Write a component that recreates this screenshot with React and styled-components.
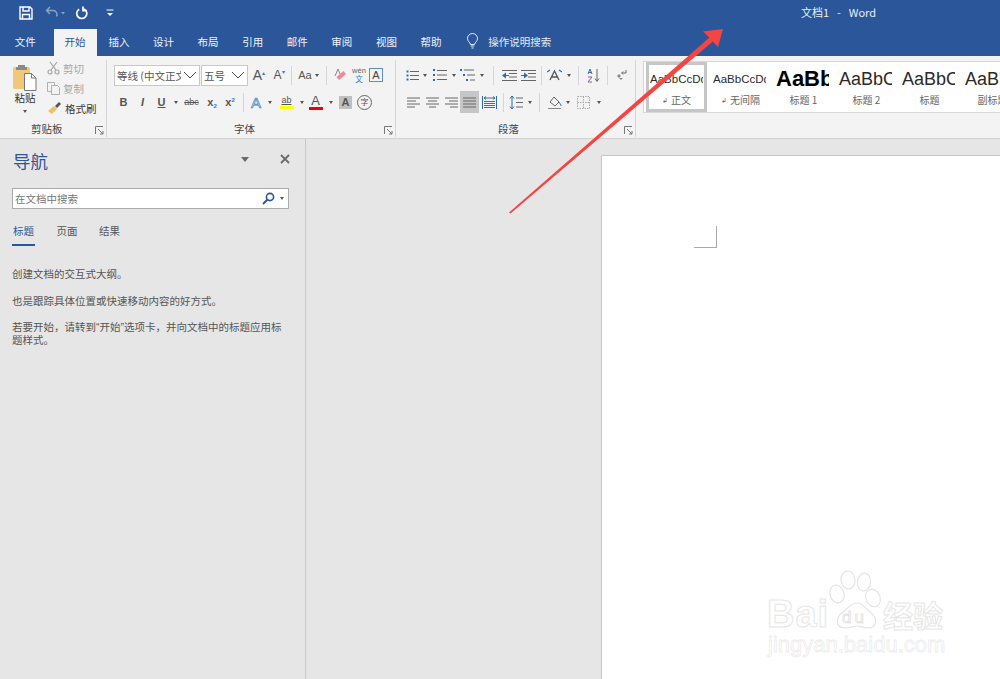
import React from "react";
import styled, { createGlobalStyle } from "styled-components";

const Global = createGlobalStyle`
  html, body { margin: 0; padding: 0; background: #e6e6e6; }
  body { width: 1000px; height: 679px; overflow: hidden; font-family: "Noto Sans CJK SC", "Liberation Sans", sans-serif; }
`;
const Shell = styled.div`position: relative; width: 1000px; height: 679px; overflow: hidden; display: flex; flex-direction: column;`;
const TitleBar = styled.header`background: #2b579a; height: 56px; display: flex; flex-direction: column; flex: none;`;
const TopRow = styled.div`height: 29px; display: flex; align-items: center; color: #fff;`;
const Qat = styled.div`width: 120px; display: flex; align-items: center; padding-left: 19px; box-sizing: border-box; margin-top: -3px;`;
const QatSlot = styled.span`display: flex; width: ${p => p.$w}px; opacity: ${p => p.$dim ? .45 : 1};`;
const DocTitle = styled.div`margin-left: 681px; margin-top: -6px; font-size: 11px; color: #e8edf5; white-space: pre; word-spacing: 1.5px;`;
const TabRow = styled.nav`height: 27px; display: flex; padding-left: 3px; align-items: stretch;`;
const Tab = styled.div`width: ${p => p.$w || 44.6}px; margin-left: ${p => p.$ml || 0}px; display: flex; align-items: center; justify-content: center; font-size: 10.5px; flex: none; padding-bottom: 3px; box-sizing: border-box;
  color: ${p => p.$on ? "#2b579a" : "#f0f3f8"}; background: ${p => p.$on ? "#f3f3f3" : "transparent"};`;
const Search = styled.div`display: flex; align-items: center; gap: 9px; margin-left: 13px; font-size: 10.5px; color: #e4eaf3; padding-bottom: 3px;`;

const Ribbon = styled.section`height: 83px; background: #f3f3f3; border-bottom: 1px solid #d2d2d2; box-sizing: border-box; flex: none; display: flex; overflow: hidden;`;
const Group = styled.div`width: ${p => p.$w}px; height: 77px; margin-top: 4px; flex: none; border-right: 1px solid #d6d6d6; box-sizing: border-box; display: flex; flex-direction: column; position: relative;`;
const GroupBody = styled.div`height: 60px; padding: 4px 0 0 ${p => p.$pl || 0}px; box-sizing: border-box; display: flex; flex-direction: column; gap: 5px;`;
const GroupLabel = styled.div`height: 17px; font-size: 10.5px; color: #444; line-height: 17px; padding-left: ${p => p.$pl}px;`;
const Launcher = styled.span`position: absolute; right: 2px; bottom: 2px; display: flex;`;
const Row = styled.div`display: flex; align-items: center; height: 22px;`;
const Cell = styled.span`width: ${p => p.$w}px; height: 22px; flex: none; display: flex; align-items: center; justify-content: center; background: ${p => p.$on ? "#c6c6c6" : "transparent"};`;
const Sep = styled.span`width: 1px; height: 19px; background: #d6d6d6; flex: none; margin: 0 ${p => p.$m || 5}px;`;
const Drop = styled.span`width: 0; height: 0; border-left: 2.5px solid transparent; border-right: 2.5px solid transparent; border-top: 3px solid #555; flex: none; margin-left: ${p => p.$ml || 0}px;`;

const ClipBody = styled.div`display: flex; height: 60px;`;
const PasteCol = styled.div`width: 47px; flex: none; display: flex; flex-direction: column; align-items: center; padding: 3px 0 0 3px; box-sizing: border-box;`;
const PasteIcon = styled.span`display: flex; height: 28px; margin-bottom: 0;`;
const PasteLabel = styled.span`font-size: 10.5px; color: #333; line-height: 14px;`;
const PasteDrop = styled(Drop)`margin-top: 5px;`;
const ClipCol = styled.div`display: flex; flex-direction: column; margin-top: -2px;`;
const ClipItem = styled.div`height: 20px; display: flex; align-items: center; gap: 3px; font-size: 10.5px; color: ${p => p.$off ? "#a6a6a6" : "#3a3a3a"};`;

const Select = styled.div`width: ${p => p.$w}px; height: 21px; background: #fff; border: 1px solid #c8c8c8; box-sizing: border-box; display: flex; align-items: center; justify-content: space-between; flex: none; font-size: 10.5px; color: #555; padding-left: 2px; overflow: hidden; margin-right: ${p => p.$mr || 0}px;`;
const SelectText = styled.span`white-space: nowrap; overflow: hidden; flex: 1; min-width: 0;`;
const Chevron = styled.svg`flex: none; margin: 0 2px;`;
const Glyph = styled.span`font-family: "Liberation Sans", sans-serif; font-size: ${p => p.$s || 11}px; font-weight: ${p => p.$b ? 700 : 400}; font-style: ${p => p.$i ? "italic" : "normal"}; color: ${p => p.$c || "#555"}; text-decoration: ${p => p.$u ? "underline" : p.$x ? "line-through" : "none"}; line-height: 1; display: inline-flex; align-items: baseline; white-space: nowrap;`;
const OutlineA = styled(Glyph)`-webkit-text-stroke: .7px #4a86c5; color: #e8f0f8;`;
const Tiny = styled.span`font-size: 6px; color: ${p => p.$c || "#2b7cd3"}; position: relative; top: ${p => p.$t || 0}px;`;
const ColorStack = styled.span`display: flex; flex-direction: column; align-items: center; width: 15px;`;
const ColorBar = styled.span`display: block; width: 14px; height: 3px; background: ${p => p.$c}; margin-top: ${p => p.$mt || 0}px;`;
const Boxed = styled.span`width: 14px; height: 14px; border: 1px solid #5b8fc9; box-sizing: border-box; display: flex; align-items: center; justify-content: center; font: 11px "Liberation Sans", sans-serif; color: #444;`;
const Shade = styled.span`width: 13px; height: 13px; background: #bfbfbf; display: flex; align-items: center; justify-content: center; font: 700 11px "Liberation Sans", sans-serif; color: #555;`;
const Circled = styled.span`width: 13px; height: 13px; border: 1px solid #666; border-radius: 50%; display: flex; align-items: center; justify-content: center; font-size: 8px; color: #555; line-height: 1;`;
const Wen = styled.span`display: flex; flex-direction: column; align-items: center; line-height: 8px; font-size: 7.5px; color: #666; font-family: "Liberation Sans", sans-serif;`;
const WenZh = styled.span`color: #2b7cd3; font-family: "Noto Sans CJK SC", sans-serif; font-size: 7.5px;`;

const StylesArea = styled.div`flex: 1; padding: 5px 0 0 7px; min-width: 0;`;
const Gallery = styled.div`height: 52px; background: #fff; border: 1px solid #d8d8d8; border-right: 0; box-sizing: border-box; display: flex; overflow: hidden; align-items: stretch;`;
const StyleItem = styled.div`width: 63px; flex: none; box-sizing: border-box; padding: 0 1px; display: flex; flex-direction: column; align-items: center; border: ${p => p.$on ? "3px solid #c6c6c6" : "3px solid transparent"}; ${p => p.$on && "margin: 0 2px; width: 61px; padding: 0 1px; "}`;
const Sample = styled.div`height: 28px; width: 53px; align-self: flex-start; overflow: hidden; white-space: nowrap; display: flex; align-items: center; font-family: "Liberation Sans", sans-serif; font-size: ${p => p.$s}px; font-weight: ${p => p.$b ? 700 : 400}; color: ${p => p.$b ? "#000" : "#2a2a2a"};`;
const StyleName = styled.div`font-size: 10px; line-height: 14px; color: #666; white-space: nowrap; display: flex; align-items: center; gap: 3px;`;
const Ret = styled.span`font-size: 7px; color: #666;`;

const Body = styled.main`flex: 1; display: flex; min-height: 0;`;
const NavPane = styled.aside`width: 306px; flex: none; border-right: 1px solid #c8c8c8; background: #e6e6e6; padding: 10px 16px 0 12px; box-sizing: border-box;`;
const NavHead = styled.div`display: flex; align-items: center; height: 25px;`;
const NavTitle = styled.h2`margin: -2px 0 0; font-size: 17.5px; font-weight: 400; color: #2b579a; flex: 1; line-height: 25px; padding-left: 1px;`;
const NavMenu = styled.span`width: 0; height: 0; border-left: 4.5px solid transparent; border-right: 4.5px solid transparent; border-top: 5px solid #6a6a6a; margin-right: 31px; margin-top: -4px;`;
const NavClose = styled.span`display: flex; margin-right: -1px; margin-top: -5px;`;
const NavSearch = styled.div`height: 21px; margin-top: 14px; width: 277px; background: #fff; border: 1px solid #ababab; box-sizing: border-box; display: flex; align-items: center; font-size: 10.5px; color: #777; padding: 0 4px 0 2px;`;
const NavHint = styled.span`flex: 1;`;
const NavTabs = styled.div`display: flex; margin-top: 13px; height: 24px; box-sizing: border-box;`;
const NavTab = styled.div`width: ${p => p.$w}px; flex: none; font-size: 10.5px; line-height: 17px; height: 24px; box-sizing: border-box; color: ${p => p.$on ? "#2b579a" : "#555"}; margin-right: ${p => p.$mr}px; text-align: center; border-bottom: ${p => p.$on ? "2.5px solid #2b579a" : "0"};`;
const NavText = styled.p`margin: ${p => p.$mt}px 0 0; font-family: "Liberation Sans", "Noto Sans CJK SC", sans-serif; font-size: 10.5px; line-height: 13px; color: #555; width: 277px;`;
const DocArea = styled.div`flex: 1; padding: 16px 0 0 295px; overflow: hidden;`;
const Page = styled.div`width: 500px; height: 600px; background: #fff; border: 1px solid #c8c8c8; box-sizing: border-box; padding: 70px 0 0 92px;`;
const CropMark = styled.div`width: 23px; height: 22px; border-right: 1px solid #aaa; border-bottom: 1px solid #aaa; box-sizing: border-box;`;

const ArrowSvg = styled.svg`position: absolute; left: 0; top: 0; pointer-events: none;`;
const Watermark = styled.div`position: absolute; left: 765px; top: 570px; width: 185px; height: 90px; pointer-events: none; color: #fff;`;
const Paw = styled.svg`position: absolute; left: 0; top: 0;`;
const WmBai = styled.span`position: absolute; left: 2px; top: 25px; font: 700 38px/38px "Liberation Sans", sans-serif; -webkit-text-stroke: 1px #e6e6e6; color: #fff; letter-spacing: 1px;`;
const WmDu = styled.span`position: absolute; left: 77px; top: 38px; font: 400 17px/19px "Liberation Sans", sans-serif; -webkit-text-stroke: .8px #e2e2e2; color: #fff; letter-spacing: 3px;`;
const WmCn = styled.span`position: absolute; left: 118px; top: 28px; font: 700 30px/32px "Noto Sans CJK SC", sans-serif; -webkit-text-stroke: 1px #e6e6e6; color: #fff;`;
const WmUrl = styled.span`position: absolute; left: 3px; top: 63px; font: 400 22px/24px "Liberation Sans", sans-serif; -webkit-text-stroke: .8px #ececec; color: #fff; white-space: nowrap;`;

const I = ({ w = 14, h = 14, children, s = "#555", sw = 1, f = "none" }) => (
  <svg width={w} height={h} viewBox={`0 0 ${w} ${h}`} fill={f} stroke={s} strokeWidth={sw}>{children}</svg>
);
const Lines = ({ x = 0, w = 13, ys, c = "#666", wid }) => ys.map((y, i) => (
  <line key={i} x1={x + (wid && wid[i] ? wid[i][0] : 0)} x2={x + (wid && wid[i] ? wid[i][1] : w)} y1={y} y2={y} stroke={c} />
));

const Launch = () => (
  <I w={9} h={9} s="#777"><path d="M.5 8V.5H8M3 3l5 5M8 5v3H5" /></I>
);
const Chev = ({ w = 14 }) => (
  <Chevron width={w} height="8" viewBox="0 0 14 8" fill="none" stroke="#444"><path d="M1 1l6 6 6-6" /></Chevron>
);

export default function App() {
  return (
    <Shell>
      <Global />
      <TitleBar>
        <TopRow>
          <Qat>
            <QatSlot $w={26}>
              <I w={14} h={14} s="#fff" sw={1.4}><path d="M1 1h10l2 2v10H1z" /><path d="M4 1v4h6V1M3.5 13V8.5h7V13" /></I>
            </QatSlot>
            <QatSlot $w={30} $dim>
              <I w={21} h={14} s="#fff" sw={1.4}><path d="M5 1L1.5 4.5 5 8M2 4.5h6a4 4 0 0 1 3.5 6" /><path d="M16 6l2 2.5L20 6z" fill="#fff" stroke="none" /></I>
            </QatSlot>
            <QatSlot $w={31}>
              <I w={13} h={14} s="#fff" sw={1.7}><path d="M4.2 3.2A5 5 0 1 0 9 3M8 .5v4.2h4" /></I>
            </QatSlot>
            <QatSlot $w={10}>
              <I w={8} h={8} s="#fff"><path d="M.5 1h7" /><path d="M1 4h6L4 7z" fill="#fff" stroke="none" /></I>
            </QatSlot>
          </Qat>
          <DocTitle>文档1  -  Word</DocTitle>
        </TopRow>
        <TabRow>
          <Tab>文件</Tab>
          <Tab $on $w={43} $ml={6}>开始</Tab>
          {["插入", "设计", "布局", "引用", "邮件", "审阅", "视图", "帮助"].map(t => (
            <Tab key={t}>{t}</Tab>
          ))}
          <Search>
            <I w={13} h={16} s="#e8edf5"><path d="M4.5 11.5C4 9 1.5 8.5 1.5 5.5a5 5 0 0 1 10 0c0 3-2.5 3.5-3 6zM4.7 13h3.6M5.5 15h2" /></I>
            操作说明搜索
          </Search>
        </TabRow>
      </TitleBar>

      <Ribbon>
        <Group $w={107}>
          <ClipBody>
            <PasteCol>
              <PasteIcon>
                <I w={26} h={28} s="none">
                  <rect x="1" y="4" width="17" height="22" rx="1.5" fill="#f0c878" />
                  <path d="M6 4V2h7v2h2v3H4V4z" fill="#8a8a8a" />
                  <path d="M12.5 10.5h7l4.5 4.5v12.5h-11.5z" fill="#fff" stroke="#777" />
                  <path d="M19.5 10.5V15H24" stroke="#777" fill="none" />
                </I>
              </PasteIcon>
              <PasteLabel>粘贴</PasteLabel>
              <PasteDrop />
            </PasteCol>
            <ClipCol>
              <ClipItem $off>
                <I w={13} h={14} s="#a6a6a6" sw={1.2}><circle cx="3" cy="11" r="2" /><circle cx="10" cy="11" r="2" /><path d="M4 9l6-8M9 9L3 1" /></I>
                剪切
              </ClipItem>
              <ClipItem $off>
                <I w={13} h={14} s="#b0b0b0"><path d="M.5 1.5h7v3M.5 1.5v9h3.5" /><path d="M4.5 4.5h6l2 2v7h-8z" /></I>
                复制
              </ClipItem>
              <ClipItem>
                <I w={15} h={14} s="none"><path d="M1 10l6-5 3 3-5 5z" fill="#f0c060" /><path d="M8 5l4-4 2 2-4 4z" fill="#555" /></I>
                格式刷
              </ClipItem>
            </ClipCol>
          </ClipBody>
          <GroupLabel $pl={31}>剪贴板</GroupLabel>
          <Launcher><Launch /></Launcher>
        </Group>

        <Group $w={289}>
          <GroupBody $pl={7}>
            <Row>
              <Select $w={86} $mr={1}><SelectText>等线 (中文正文)</SelectText><Chev /></Select>
              <Select $w={47}><SelectText>五号</SelectText><Chev /></Select>
              <Cell $w={22}><Glyph $s={14}>A<Tiny $t={-5}>▴</Tiny></Glyph></Cell>
              <Cell $w={18}><Glyph $s={12}>A<Tiny $t={-5}>▾</Tiny></Glyph></Cell>
              <Sep $m={3} />
              <Cell $w={27}><Glyph $s={11}>Aa</Glyph><Drop $ml={3} /></Cell>
              <Sep $m={4} />
              <Cell $w={18}>
                <I w={15} h={14} s="none"><path d="M6 12l7-6-2.5-3-7 6z" fill="#f08a94" /><path d="M2 8l3-7 2 5" stroke="#888" /></I>
              </Cell>
              <Cell $w={20}><Wen>wén<WenZh>文</WenZh></Wen></Cell>
              <Cell $w={14}><Boxed>A</Boxed></Cell>
            </Row>
            <Row>
              <Cell $w={19}><Glyph $b>B</Glyph></Cell>
              <Cell $w={19}><Glyph $b $i>I</Glyph></Cell>
              <Cell $w={19}><Glyph $b $u>U</Glyph></Cell>
              <Cell $w={9}><Drop /></Cell>
              <Cell $w={23}><Glyph $s={9} $x>abc</Glyph></Cell>
              <Cell $w={18}><Glyph $b>x<Tiny $t={2}>2</Tiny></Glyph></Cell>
              <Cell $w={18}><Glyph $b>x<Tiny $t={-4}>2</Tiny></Glyph></Cell>
              <Sep $m={4} />
              <Cell $w={16}><OutlineA $s={15}>A</OutlineA></Cell>
              <Cell $w={11}><Drop /></Cell>
              <Cell $w={23}><ColorStack><Glyph $s={9} $u>ab</Glyph><ColorBar $c="#ffff00" $mt={1} /></ColorStack></Cell>
              <Cell $w={7}><Drop /></Cell>
              <Cell $w={21}><ColorStack><Glyph $s={13}>A</Glyph><ColorBar $c="#f00000" /></ColorStack></Cell>
              <Cell $w={10}><Drop /></Cell>
              <Cell $w={19}><Shade>A</Shade></Cell>
              <Cell $w={19}><Circled>字</Circled></Cell>
            </Row>
          </GroupBody>
          <GroupLabel $pl={127}>字体</GroupLabel>
          <Launcher><Launch /></Launcher>
        </Group>

        <Group $w={240}>
          <GroupBody $pl={8}>
            <Row>
              <Cell $w={16}><I w={13} h={13}><path d="M.5 1.5h2v2h-2zM.5 5.5h2v2h-2zM.5 9.5h2v2h-2z" fill="#2b6cb0" stroke="none" /><Lines x={4} w={9} ys={[2.5, 6.5, 10.5]} /></I></Cell>
              <Cell $w={10}><Drop /></Cell>
              <Cell $w={19}><I w={14} h={14}><path d="M0 1h2v2H0zM0 6h2v2H0zM0 11h2v2H0z" fill="#2b6cb0" stroke="none" /><Lines x={4} w={10} ys={[2.5, 7, 11.5]} /></I></Cell>
              <Cell $w={9}><Drop /></Cell>
              <Cell $w={18}><I w={15} h={14}><path d="M0 1h2v2H0zM3 6h2v2H3zM6 11h2v2H6z" fill="#2b6cb0" stroke="none" /><Lines ys={[2]} x={4} w={10} /><Lines ys={[7]} x={7} w={8} /><Lines ys={[12]} x={10} w={5} /></I></Cell>
              <Cell $w={11}><Drop /></Cell>
              <Sep $m={6} />
              <Cell $w={19}><I w={15} h={13}><Lines x={0} w={15} ys={[1.5, 11.5]} /><Lines x={7} w={8} ys={[4.5, 8]} /><path d="M0 6.5L4 3.5v6z" fill="#2b6cb0" stroke="none" /><path d="M3 6.5h4" stroke="#2b6cb0" /></I></Cell>
              <Cell $w={19}><I w={15} h={13}><Lines x={0} w={15} ys={[1.5, 11.5]} /><Lines x={7} w={8} ys={[4.5, 8]} /><path d="M6 6.5L2 3.5v6z" fill="#2b6cb0" stroke="none" transform="translate(1 0)" /><path d="M0 6.5h4" stroke="#2b6cb0" /></I></Cell>
              <Sep $m={3} />
              <Cell $w={19}><I w={15} h={14} s="#555" sw={1.3}><path d="M3 12L7.5 3l4.5 9M4.5 9h6" /><path d="M0 4l3-2M15 4l-3-2" stroke="#2b6cb0" /></I></Cell>
              <Cell $w={9}><Drop /></Cell>
              <Sep $m={5} />
              <Cell $w={18}><I w={13} h={15} s="none"><path d="M1 6l2-5 2 5M1.5 4.5h3" stroke="#2b6cb0" /><path d="M1 9h4l-4 5h4" stroke="#8a5bb5" /><path d="M10 1v12M8 10.5l2 3 2-3" stroke="#666" /></I></Cell>
              <Sep $m={5} />
              <Cell $w={16}><I w={11} h={13} s="#666"><path d="M10 1v3H6M7 2.5L5.5 4 7 5.5" /><path d="M1 7l2 2 2-2-2-2zM3 9l2 2 2-2" fill="#888" stroke="none" /></I></Cell>
            </Row>
            <Row>
              <Cell $w={19}><I w={13} h={11}><Lines ys={[1, 4, 7, 10]} wid={[[0, 13], [0, 9], [0, 13], [0, 8]]} /></I></Cell>
              <Cell $w={19}><I w={13} h={11}><Lines ys={[1, 4, 7, 10]} wid={[[0, 13], [2, 11], [0, 13], [3, 10]]} /></I></Cell>
              <Cell $w={18}><I w={13} h={11}><Lines ys={[1, 4, 7, 10]} wid={[[0, 13], [4, 13], [0, 13], [5, 13]]} /></I></Cell>
              <Cell $w={19} $on><I w={13} h={11}><Lines ys={[1, 4, 7, 10]} /></I></Cell>
              <Cell $w={21}><I w={15} h={15}><path d="M.5 1v13M14.5 1v13" stroke="#2b6cb0" /><path d="M2 3h11M4 1.5L2 3l2 1.5M11 1.5L13 3l-2 1.5" stroke="#2b6cb0" /><Lines x={2} w={11} ys={[6.5, 8.5, 10.5, 12.5]} /></I></Cell>
              <Sep $m={3} />
              <Cell $w={18}><I w={14} h={15}><path d="M3 1v13M1 3.5L3 1l2 2.5M1 11.5L3 14l2-2.5" stroke="#2b6cb0" /><Lines x={7} w={7} ys={[3, 7.5, 12]} /></I></Cell>
              <Cell $w={9}><Drop /></Cell>
              <Sep $m={5} />
              <Cell $w={18}><I w={15} h={15} s="#666"><path d="M3 7l4-5 5 5-4 4z" /><path d="M12 7c1 2 2 2 2 4" stroke="#2b6cb0" /><path d="M1 13.5h13" stroke="#888" sw={2} /></I></Cell>
              <Cell $w={9}><Drop /></Cell>
              <Cell $w={23}><I w={13} h={13} s="#aaa"><path d="M.5.5h12v12H.5zM6.5.5v12M.5 6.5h12" strokeDasharray="1.5 1" /></I></Cell>
              <Cell $w={8}><Drop /></Cell>
            </Row>
          </GroupBody>
          <GroupLabel $pl={102}>段落</GroupLabel>
          <Launcher><Launch /></Launcher>
        </Group>

        <StylesArea>
          <Gallery>
            <StyleItem $on><Sample $s={11.5}>AaBbCcDd</Sample><StyleName><Ret>↲</Ret>正文</StyleName></StyleItem>
            <StyleItem><Sample $s={11.5}>AaBbCcDd</Sample><StyleName><Ret>↲</Ret>无间隔</StyleName></StyleItem>
            <StyleItem><Sample $s={22} $b>AaBb</Sample><StyleName>标题 1</StyleName></StyleItem>
            <StyleItem><Sample $s={18}>AaBbC</Sample><StyleName>标题 2</StyleName></StyleItem>
            <StyleItem><Sample $s={18}>AaBbC</Sample><StyleName>标题</StyleName></StyleItem>
            <StyleItem><Sample $s={18}>AaBbC</Sample><StyleName>副标题</StyleName></StyleItem>
          </Gallery>
        </StylesArea>
      </Ribbon>

      <Body>
        <NavPane>
          <NavHead>
            <NavTitle>导航</NavTitle>
            <NavMenu />
            <NavClose><I w={10} h={10} s="#6a6a6a" sw={1.8}><path d="M1 1l8 8M9 1l-8 8" /></I></NavClose>
          </NavHead>
          <NavSearch>
            <NavHint>在文档中搜索</NavHint>
            <I w={13} h={13} s="#2b579a" sw={1.6}><circle cx="8" cy="5" r="3.6" /><path d="M5.5 7.5L1 12" strokeWidth="2" /></I>
            <Drop $ml={5} />
          </NavSearch>
          <NavTabs>
            <NavTab $on $w={23} $mr={21}>标题</NavTab>
            <NavTab $w={22} $mr={20}>页面</NavTab>
            <NavTab $w={23} $mr={0}>结果</NavTab>
          </NavTabs>
          <NavText $mt={22}>创建文档的交互式大纲。</NavText>
          <NavText $mt={14}>也是跟踪具体位置或快速移动内容的好方式。</NavText>
          <NavText $mt={13}>若要开始，请转到“开始”选项卡，并向文档中的标题应用标题样式。</NavText>
        </NavPane>
        <DocArea>
          <Page><CropMark /></Page>
        </DocArea>
      </Body>

      <ArrowSvg width="1000" height="679" viewBox="0 0 1000 679">
        <polygon points="509,212.5 510.5,213.5 712.8,41.6 718,47 723,29 703,31.5 709.5,37.5" fill="#f44545" />
      </ArrowSvg>

      <Watermark>
        <Paw width="185" height="90" viewBox="0 0 185 90" fill="#fff" stroke="#e4e4e4" strokeWidth="1.2">
          <ellipse cx="72" cy="24" rx="7" ry="9" transform="rotate(-20 72 24)" />
          <ellipse cx="83" cy="10" rx="7" ry="9" transform="rotate(-6 83 10)" />
          <ellipse cx="99" cy="12" rx="6.5" ry="9" transform="rotate(8 99 12)" />
          <ellipse cx="108" cy="28" rx="7" ry="9" transform="rotate(-25 108 28)" />
          <path d="M92 33c6 0 8 5 13 9 7 5 9 16-3 16-5 0-6-2-10-2s-6 2-11 2c-12 0-10-11-3-16 5-4 8-9 14-9z" />
        </Paw>
        <WmBai>Bai</WmBai>
        <WmDu>du</WmDu>
        <WmCn>经验</WmCn>
        <WmUrl>jingyan.baidu.com</WmUrl>
      </Watermark>
    </Shell>
  );
}
